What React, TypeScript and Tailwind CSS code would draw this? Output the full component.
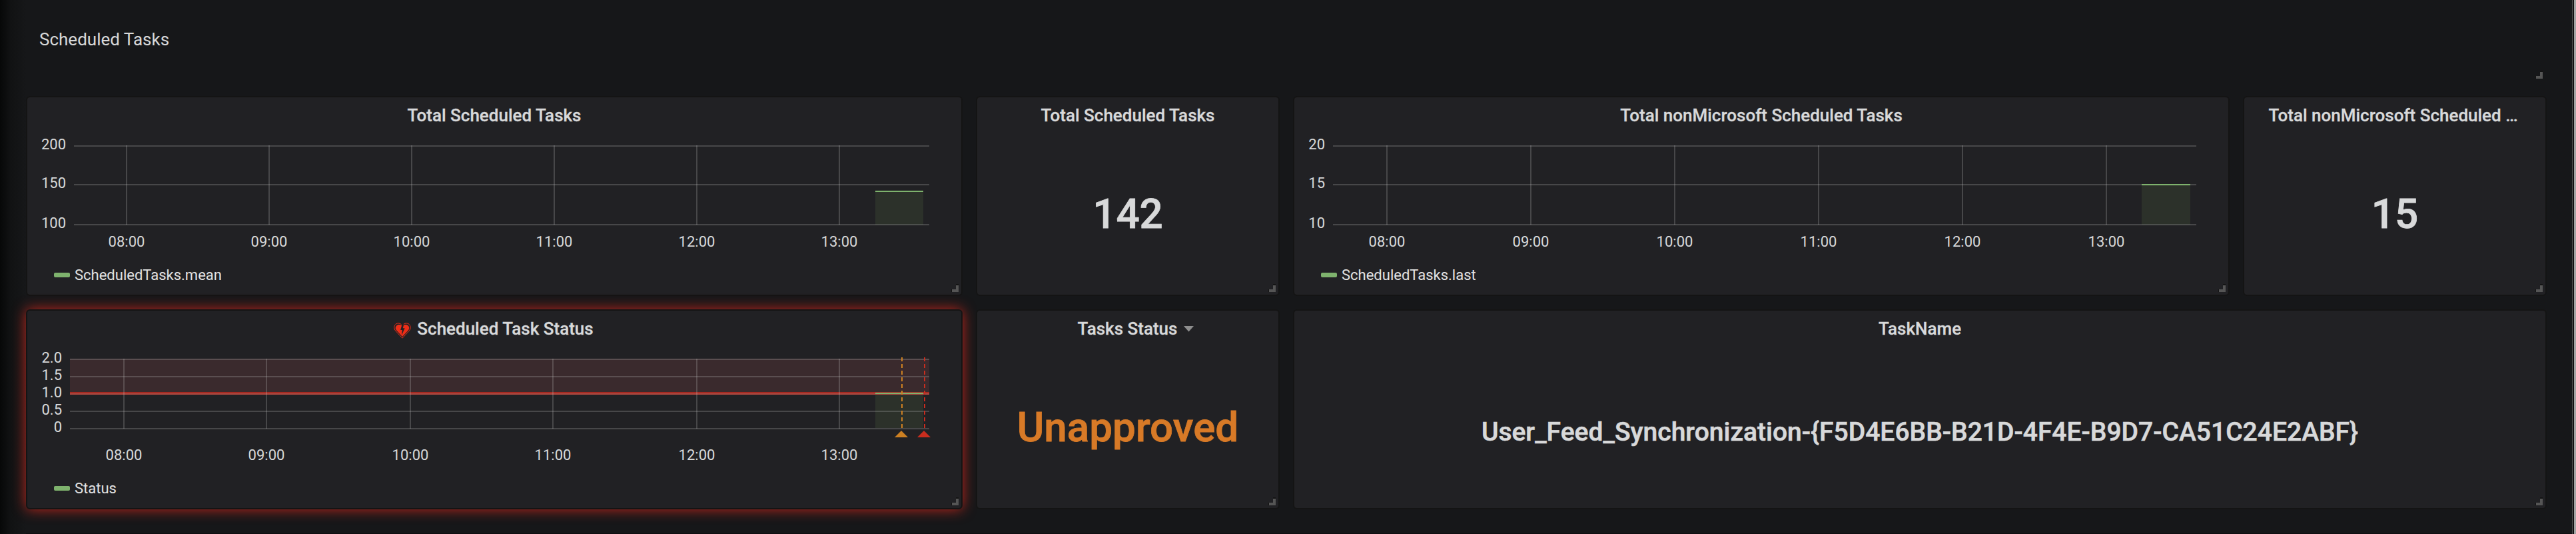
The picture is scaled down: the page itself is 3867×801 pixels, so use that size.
import React from "react";

type Tick = { at: number; label: string };
type Chart = {
  yTicks: Tick[];
  xTicks: Tick[];
  left: number;
  right: number;
  labelRight: number;
  xLabelY: number;
  series: { x0: number; x1: number; y: number; h: number };
  alert?: boolean;
};

const FONT = "font-['Roboto','Liberation_Sans',sans-serif]";

function Grip() {
  return (
    <svg className="absolute right-[4px] bottom-[4px] h-[12px] w-[12px]" viewBox="0 0 12 12" shapeRendering="crispEdges">
      <path d="M8 0H12V2H8zM1 8H2V12H1z" fill="#141414" />
      <path d="M8 2H12V12H2V8H8z" fill="#555555" />
    </svg>
  );
}

function Panel({ width, alert, children }: { width: string; alert?: boolean; children: React.ReactNode }) {
  return (
    <section
      className={`relative flex h-[300px] shrink-0 flex-col rounded-[6px] border-2 border-[#141414] bg-[#212124] ${width} ${
        alert ? "shadow-[0_0_20px_rgba(212,40,28,0.9)]" : ""
      }`}
    >
      {children}
      <Grip />
    </section>
  );
}

function Title({ children }: { children: React.ReactNode }) {
  return (
    <header className="flex h-[54px] shrink-0 items-center justify-center text-[26px] leading-[54px] font-medium whitespace-nowrap text-[#d8d9da] [-webkit-text-stroke:0.3px]">
      {children}
    </header>
  );
}

function Value({ color, children }: { color: string; children: React.ReactNode }) {
  return (
    <div
      className={`flex flex-1 items-start justify-center pt-[83px] text-[62px] leading-[76px] font-medium [-webkit-text-stroke:0.8px] ${color}`}
    >
      {children}
    </div>
  );
}

function Graph({ c }: { c: Chart }) {
  const top = c.yTicks[0].at;
  const bottom = c.yTicks[c.yTicks.length - 1].at;
  const w = c.right - c.left;
  const s = c.series;
  return (
    <svg className="h-[184px] w-full shrink-0" viewBox="0 0 1402 184">
      <g shapeRendering="crispEdges">
        {c.alert && <rect x={c.left} y={top} width={w} height={52} fill="#3a2a2d" />}
        <rect x={s.x0} y={s.y} width={s.x1 - s.x0} height={s.h} fill="#2c312a" />
        {c.yTicks.map((t) => (
          <rect key={t.label} x={c.left} y={t.at} width={w} height={2} fill="#c8c8c8" fillOpacity={0.23} />
        ))}
        {c.alert && (
          <>
            <rect x={c.left} y={top + 50} width={w} height={2} fill="#a62a22" />
            <rect x={c.left} y={top + 52} width={w} height={2} fill="#ab4a42" />
          </>
        )}
        {c.xTicks.map((t) => (
          <rect key={t.label} x={t.at} y={top} width={2} height={bottom - top + 1} fill="#c8c8c8" fillOpacity={0.23} />
        ))}
        <rect x={s.x0} y={s.y} width={s.x1 - s.x0} height={2} fill="#7eb26d" />
        {c.alert && (
          <>
            <path d="M1313 16V122" stroke="#cc8022" strokeWidth={2} strokeDasharray="6 4" />
            <path d="M1347 16V122" stroke="#c92d1e" strokeWidth={2} strokeDasharray="6 4" />
          </>
        )}
      </g>
      {c.alert && (
        <>
          <path d="M1302 136L1312 126L1322 136z" fill="#cc8022" />
          <path d="M1336 136L1346 126L1356 136z" fill="#c92d1e" />
        </>
      )}
      <g fill="#d8d9da" fontSize="22">
        {c.yTicks.map((t) => (
          <text key={t.label} x={c.labelRight} y={t.at + 6} textAnchor="end">
            {t.label}
          </text>
        ))}
        {c.xTicks.map((t) => (
          <text key={t.label} x={t.at + 1} y={c.xLabelY} textAnchor="middle">
            {t.label}
          </text>
        ))}
      </g>
    </svg>
  );
}

function Legend({ label }: { label: string }) {
  return (
    <div className="flex h-[58px] items-start pt-[14px] pl-[40px] text-[22px] leading-[30px] text-[#e3e3e3]">
      <span className="mt-[11px] mr-[7px] h-[7px] w-[24px] rounded-[2px] bg-[#7eb26d]" />
      {label}
    </div>
  );
}

const y3 = (a: string, b: string, c: string): Tick[] => [
  { at: 18, label: a },
  { at: 76, label: b },
  { at: 136, label: c },
];
const HOURS = ["08:00", "09:00", "10:00", "11:00", "12:00", "13:00"];
const hours = (xs: number[]): Tick[] => xs.map((at, i) => ({ at, label: HOURS[i] }));

const total: Chart = {
  yTicks: y3("200", "150", "100"),
  xTicks: hours([148, 362, 576, 790, 1004, 1218]),
  left: 70,
  right: 1354,
  labelRight: 58,
  xLabelY: 170,
  series: { x0: 1273, x1: 1345, y: 86, h: 51 },
};
const nonMs: Chart = {
  yTicks: y3("20", "15", "10"),
  xTicks: hours([138, 354, 570, 786, 1002, 1218]),
  left: 58,
  right: 1354,
  labelRight: 46,
  xLabelY: 170,
  series: { x0: 1272, x1: 1345, y: 76, h: 61 },
};
const status: Chart = {
  yTicks: [
    { at: 18, label: "2.0" },
    { at: 44, label: "1.5" },
    { at: 70, label: "1.0" },
    { at: 96, label: "0.5" },
    { at: 122, label: "0" },
  ],
  xTicks: hours([144, 358, 574, 788, 1004, 1218]),
  left: 64,
  right: 1354,
  labelRight: 52,
  xLabelY: 170,
  series: { x0: 1273, x1: 1345, y: 69, h: 53 },
  alert: true,
};

function BrokenHeart() {
  return (
    <svg className="mt-[6px] mr-[9px] h-[24px] w-[26px] shrink-0" viewBox="0 0 26 24">
      <path
        d="M11.6 2.9C9 .2 4.2.3 2 3.4C.1 6.3.5 9.4 2.7 12.1L13 23.2L23.3 12.1C25.5 9.4 25.9 6.3 24 3.4C21.8.3 17 .2 14.8 2.6"
        fill="none"
        stroke="#ed2e18"
        strokeWidth="1"
      />
      <path
        d="M13 5C11 2.6 6.2 2.2 4 4.8C2 7.3 2.4 9.4 4.2 11.4L13 21L21.8 11.4C23.6 9.4 24 7.3 22 4.8C19.8 2.2 15 2.6 13 5z"
        fill="#ed2e18"
      />
      <path d="M12.6 2.5L15 3.5L13.8 8.2H16.6L12 19L12.8 11H10.2z" fill="#212124" />
    </svg>
  );
}

export default function App() {
  return (
    <div className={`flex h-[801px] w-[3867px] overflow-hidden bg-[#161719] shadow-[inset_0_-1px_0_#0e0e0f] ${FONT}`}>
      <div className="h-[801px] w-[39px] shrink-0 bg-linear-to-r from-[#070808] via-[#111213] via-40% to-[#161719]" />
      <main className="flex w-[3784px] shrink-0 flex-col">
        <div className="relative h-[124px] shrink-0 border-2 border-transparent pt-[38px] pl-[18px] text-[26px] leading-[38px] text-[#d8d9da]">
          Scheduled Tasks
          <Grip />
        </div>
        <div className="mt-[20px] flex gap-[20px]">
          <Panel width="w-[1406px]">
            <Title>Total Scheduled Tasks</Title>
            <Graph c={total} />
            <Legend label="ScheduledTasks.mean" />
          </Panel>
          <Panel width="w-[456px]">
            <Title>Total Scheduled Tasks</Title>
            <Value color="text-[#d8d9da]">142</Value>
          </Panel>
          <Panel width="w-[1406px]">
            <Title>Total nonMicrosoft Scheduled Tasks</Title>
            <Graph c={nonMs} />
            <Legend label="ScheduledTasks.last" />
          </Panel>
          <Panel width="w-[456px]">
            <Title>
              <span className="mr-[5px]">Total nonMicrosoft Scheduled …</span>
            </Title>
            <Value color="text-[#d8d9da]">15</Value>
          </Panel>
        </div>
        <div className="mt-[20px] flex gap-[20px]">
          <Panel width="w-[1406px]" alert>
            <Title>
              <BrokenHeart />
              <span className="mr-[2px]">Scheduled Task Status</span>
            </Title>
            <Graph c={status} />
            <Legend label="Status" />
          </Panel>
          <Panel width="w-[456px]">
            <Title>
              <span className="ml-[24px]">Tasks Status</span>
              <svg className="ml-[10px] h-[9px] w-[15px]" viewBox="0 0 15 9">
                <path d="M0 0H15L7.5 8.5z" fill="#8e8e8e" />
              </svg>
            </Title>
            <Value color="text-[#d87a27]">Unapproved</Value>
          </Panel>
          <Panel width="w-[1882px]">
            <Title>TaskName</Title>
            <div className="flex flex-1 items-start justify-center pt-[104px] text-[39px] leading-[48px] font-medium text-[#d8d9da] [-webkit-text-stroke:0.6px]">
              {"User_Feed_Synchronization-{F5D4E6BB-B21D-4F4E-B9D7-CA51C24E2ABF}"}
            </div>
          </Panel>
        </div>
      </main>
      <div className="flex-1" />
      <div className="w-[2px] bg-[#434343]" />
      <div className="w-px bg-black" />
      <div className="w-[3px] bg-[#a3a3a3]" />
    </div>
  );
}
